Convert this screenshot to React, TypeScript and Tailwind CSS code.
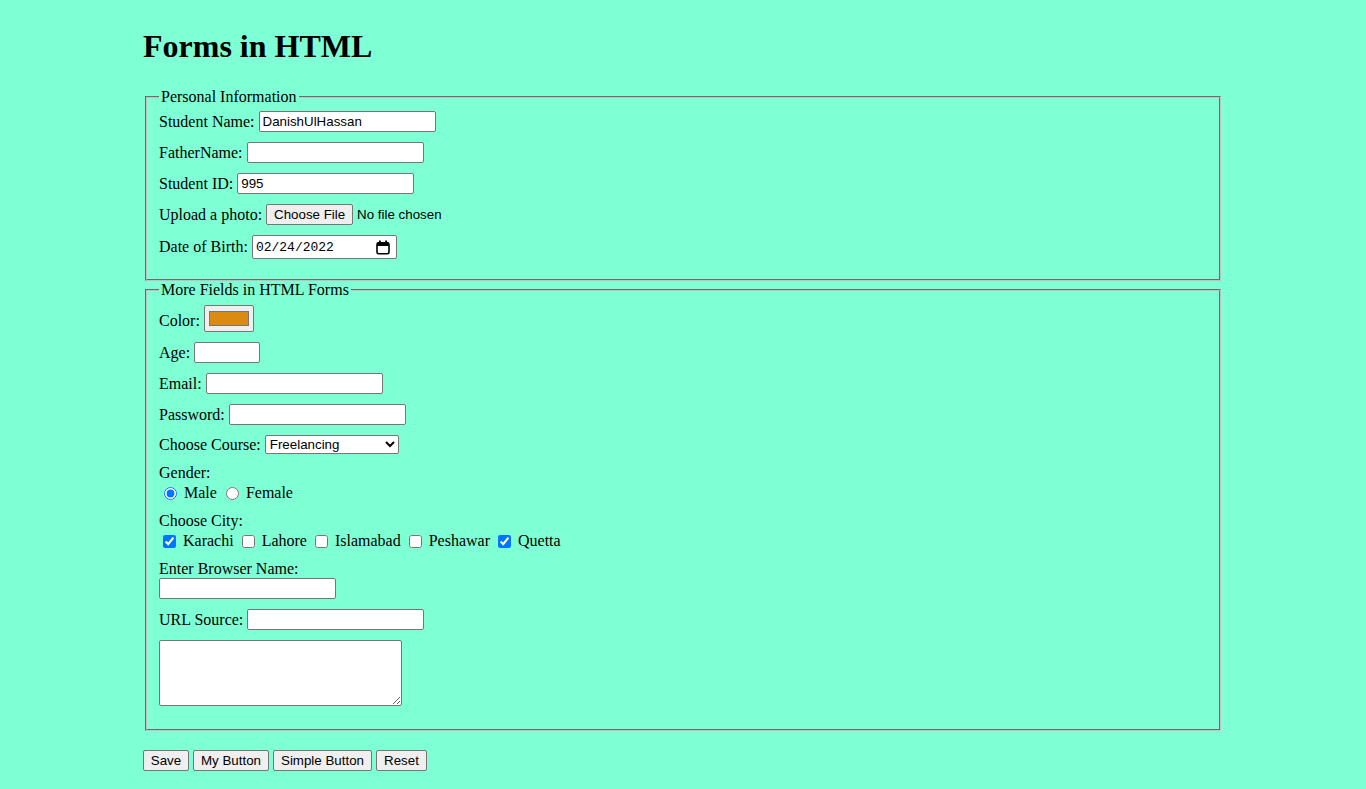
import React from "react";

const inputCls =
  "h-[21px] border border-[#767676] rounded-[2px] bg-white px-[3px] text-[13.33px] text-black font-['Liberation_Sans',Arial,sans-serif] outline-none";
const btnCls =
  "h-[21px] border border-[#767676] rounded-[2px] bg-[#efefef] text-[13.33px] leading-[19px] text-black font-['Liberation_Sans',Arial,sans-serif] flex items-center justify-center";
const fieldsetCls =
  "mx-[2px] border-2 [border-style:groove] border-[#c0c0c0] px-[12px] pt-0 min-w-0";
const legendCls = "px-[2px] leading-[18px] text-[16px]";

function CalendarIcon() {
  return (
    <svg width="14" height="15" viewBox="0 0 14 15" aria-hidden="true">
      <rect x="3" y="0.5" width="1.8" height="3" fill="black" />
      <rect x="9.2" y="0.5" width="1.8" height="3" fill="black" />
      <rect x="1" y="2.8" width="12" height="11" rx="1.6" fill="none" stroke="black" strokeWidth="1.6" />
      <rect x="1" y="2.8" width="12" height="3.2" fill="black" />
    </svg>
  );
}

export default function App() {
  return (
    <div className="min-h-[789px] bg-[#7fffd4] font-['Liberation_Serif','Times_New_Roman',serif] text-[16px] leading-[18px] text-black">
      <div className="ml-[143px] w-[1080px] pt-[28px] pb-[18px]">
        <h1 className="text-[32px] font-bold leading-[37px]">Forms in HTML</h1>

        <form className="mt-[23px]" onSubmit={(e) => e.preventDefault()}>
          <fieldset className={`${fieldsetCls} pb-[20px]`}>
            <legend className={legendCls}>Personal Information</legend>
            <div className="mt-[5px] flex h-[21px] items-center">
              <span>Student Name:</span>
              <input className={`${inputCls} ml-[4px] w-[177px]`} defaultValue="DanishUlHassan" />
            </div>
            <div className="mt-[10px] flex h-[21px] items-center">
              <span>FatherName:</span>
              <input className={`${inputCls} ml-[4px] w-[177px]`} />
            </div>
            <div className="mt-[10px] flex h-[21px] items-center">
              <span>Student ID:</span>
              <input className={`${inputCls} ml-[4px] w-[177px]`} defaultValue="995" />
            </div>
            <div className="mt-[10px] flex h-[21px] items-center">
              <span>Upload a photo:</span>
              <span className={`${btnCls} ml-[4px] w-[87px]`}>Choose File</span>
              <span className="ml-[4px] text-[13.33px] font-['Liberation_Sans',Arial,sans-serif]">No file chosen</span>
            </div>
            <div className="mt-[10px] flex h-[24px] items-center">
              <span>Date of Birth:</span>
              <div className="ml-[4px] flex h-[24px] w-[145px] items-center justify-between rounded-[2px] border border-[#767676] bg-white pl-[3px] pr-[6px]">
                <span className="mt-[1px] text-[13px] font-['Liberation_Mono','Courier_New',monospace]">02/24/2022</span>
                <CalendarIcon />
              </div>
            </div>
          </fieldset>

          <fieldset className={`${fieldsetCls} pb-[23px]`}>
            <legend className={legendCls}>More Fields in HTML Forms</legend>
            <div className="mt-[6px] flex h-[27px] items-center">
              <span className="mt-[5px]">Color:</span>
              <div className="ml-[4px] flex h-[27px] w-[50px] items-center justify-center rounded-[2px] border border-[#767676] bg-[#efefef]">
                <div className="h-[15px] w-[40px] border border-[#777777] bg-[#db8b0f]" />
              </div>
            </div>
            <div className="mt-[10px] flex h-[21px] items-center">
              <span>Age:</span>
              <input className={`${inputCls} ml-[4px] w-[66px]`} />
            </div>
            <div className="mt-[10px] flex h-[21px] items-center">
              <span>Email:</span>
              <input type="email" className={`${inputCls} ml-[4px] w-[177px]`} />
            </div>
            <div className="mt-[10px] flex h-[21px] items-center">
              <span>Password:</span>
              <input type="password" className={`${inputCls} ml-[4px] w-[177px]`} />
            </div>
            <div className="mt-[10px] flex h-[19px] items-center">
              <span>Choose Course:</span>
              <select
                defaultValue="Freelancing"
                className="ml-[4px] h-[19px] w-[134px] rounded-[2px] border border-[#767676] bg-white text-[13.33px] leading-[15px] text-black font-['Liberation_Sans',Arial,sans-serif]"
              >
                <option>Freelancing</option>
                <option>Web Development</option>
                <option>Graphic Design</option>
              </select>
            </div>
            <div className="mt-[10px] h-[18px]">Gender:</div>
            <div className="mt-[2px] flex h-[18px] items-center">
              <input type="radio" name="gender" defaultChecked className="ml-[5px] h-[13px] w-[13px]" />
              <span className="ml-[7px]">Male</span>
              <input type="radio" name="gender" className="ml-[9px] h-[13px] w-[13px]" />
              <span className="ml-[7px]">Female</span>
            </div>
            <div className="mt-[10px] h-[18px]">Choose City:</div>
            <div className="mt-[2px] flex h-[18px] items-center">
              <input type="checkbox" defaultChecked className="ml-[4px] h-[13px] w-[13px]" />
              <span className="ml-[7px]">Karachi</span>
              <input type="checkbox" className="ml-[8px] h-[13px] w-[13px]" />
              <span className="ml-[7px]">Lahore</span>
              <input type="checkbox" className="ml-[8px] h-[13px] w-[13px]" />
              <span className="ml-[7px]">Islamabad</span>
              <input type="checkbox" className="ml-[8px] h-[13px] w-[13px]" />
              <span className="ml-[7px]">Peshawar</span>
              <input type="checkbox" defaultChecked className="ml-[8px] h-[13px] w-[13px]" />
              <span className="ml-[7px]">Quetta</span>
            </div>
            <div className="mt-[10px] h-[18px]">Enter Browser Name:</div>
            <div className="flex h-[21px] items-center">
              <input className={`${inputCls} w-[177px]`} />
            </div>
            <div className="mt-[10px] flex h-[21px] items-center">
              <span>URL Source:</span>
              <input type="url" className={`${inputCls} ml-[4px] w-[177px]`} />
            </div>
            <div className="mt-[10px] flex">
              <textarea className="block h-[66px] w-[243px] resize rounded-[2px] border border-[#767676] bg-white outline-none" />
            </div>
          </fieldset>

          <div className="mt-[19px] flex gap-[4px]">
            <button type="submit" className={`${btnCls} w-[46px]`}>Save</button>
            <button type="button" className={`${btnCls} w-[76px]`}>My Button</button>
            <button type="button" className={`${btnCls} w-[99px]`}>Simple Button</button>
            <button type="reset" className={`${btnCls} w-[51px]`}>Reset</button>
          </div>
        </form>
      </div>
    </div>
  );
}
